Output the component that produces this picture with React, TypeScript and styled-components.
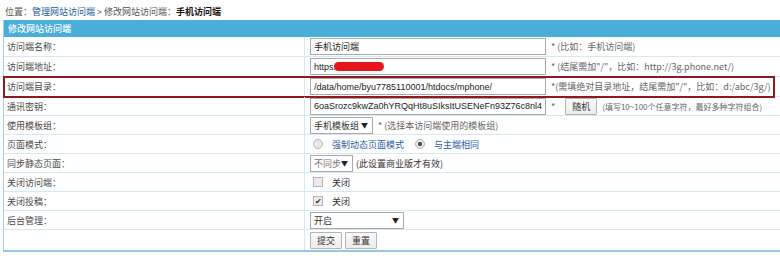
import React from "react";
import styled, { createGlobalStyle, css } from "styled-components";

const Global = createGlobalStyle`
  html, body { margin: 0; padding: 0; background: #fff; }
  body {
    font-family: "Noto Sans CJK SC", "Noto Sans", sans-serif;
    font-size: 9px;
    color: #444;
    overflow: hidden;
  }
`;

const Page = styled.div`
  padding: 4px 0 0 3px;
  width: 800px;
`;

const Crumb = styled.div`
  height: 16px;
  line-height: 16px;
  padding-left: 2px;
  color: #555;
`;

const CrumbLink = styled.span`
  color: #1d5a9e;
`;

const CrumbCurrent = styled.span`
  color: #111;
  font-weight: bold;
`;

const Panel = styled.div`
  border-left: 1px solid #a5d3ea;
  border-bottom: 2px solid #92c8e1;
`;

const PanelHead = styled.div`
  height: 17px;
  line-height: 17px;
  background: #4aaedb;
  color: #fff;
  padding-left: 4px;
  font-weight: 500;
`;

const Row = styled.div<{ $h: number; $mark?: boolean }>`
  display: grid;
  grid-template-columns: 301px 1fr;
  height: ${(p) => p.$h}px;
  border-bottom: 1px solid #d2eaf6;
  position: relative;
  &:last-child { border-bottom: none; }
  ${(p) =>
    p.$mark &&
    css`
      &::after {
        content: "";
        position: absolute;
        left: -1px;
        top: -1px;
        width: 768px;
        bottom: -2px;
        border: 2px solid #8c1a1f;
        pointer-events: none;
      }
    `}
`;

const Label = styled.div`
  border-right: 1px solid #d2eaf6;
  padding-left: 3px;
  display: flex;
  align-items: center;
  color: #484848;
`;

const Value = styled.div`
  padding-left: 5px;
  display: flex;
  align-items: center;
  gap: 3px;
  white-space: nowrap;
`;

const TextInput = styled.input`
  box-sizing: border-box;
  width: 236px;
  height: 17px;
  border: 1px solid #a9a9a9;
  padding: 0 3px;
  font-family: "Liberation Sans", Arial, sans-serif;
  font-size: 9px;
  color: #222;
  background: #fff;
  outline: none;
  margin: 0;
`;

const CnInput = styled(TextInput)`
  font-family: "Noto Sans CJK SC", sans-serif;
  font-size: 9px;
`;

const Redact = styled.span`
  position: absolute;
  left: 24px;
  top: 4px;
  width: 50px;
  height: 9px;
  border-radius: 6px;
  background: #e8141b;
  filter: blur(0.6px);
`;

const InputWrap = styled.span`
  position: relative;
  display: inline-flex;
`;

const Hint = styled.span<{ $gap?: number; $size?: number }>`
  color: #666;
  margin-left: 2px;
  margin-right: ${(p) => p.$gap ?? 0}px;
  font-size: ${(p) => p.$size ?? 9}px;
`;

const Btn = styled.button`
  box-sizing: border-box;
  height: 17px;
  padding: 0 6px;
  border: 1px solid #b5b5b5;
  background: linear-gradient(#fafafa, #ececec);
  font-family: "Noto Sans CJK SC", sans-serif;
  font-size: 9px;
  color: #333;
  line-height: 15px;
  margin: 0;
  border-radius: 1px;
`;

const SelectBox = styled.span<{ $w: number }>`
  box-sizing: border-box;
  width: ${(p) => p.$w}px;
  height: 17px;
  border: 1px solid #a9a9a9;
  background: #fff;
  display: inline-flex;
  align-items: center;
  justify-content: space-between;
  padding: 0 4px 0 3px;
  color: #333;
`;

const Muted = styled.span`
  color: #777;
`;

const Caret = styled.span`
  font-size: 7px;
  color: #222;
`;

const Radio = styled.span<{ $on?: boolean }>`
  box-sizing: border-box;
  width: 10px;
  height: 10px;
  border-radius: 50%;
  border: 1px solid #b4b4b4;
  background: radial-gradient(circle, ${(p) => (p.$on ? "#555 0 2px, #e9e9e9 2.5px" : "#e9e9e9 0")});
  display: inline-block;
  margin: 0 6px 0 3px;
`;

const Check = styled.span`
  box-sizing: border-box;
  width: 10px;
  height: 10px;
  border: 1px solid #b4b4b4;
  background: #ececec;
  display: inline-flex;
  align-items: center;
  justify-content: center;
  margin: 0 6px 0 3px;
  color: #333;
  font-size: 8px;
  line-height: 1;
`;

const Link = styled.span`
  color: #2a5aa5;
  margin-right: 5px;
`;

const Plain = styled.span`
  color: #333;
`;

export default function App() {
  return (
    <>
      <Global />
      <Page>
        <Crumb>
          位置：<CrumbLink>管理网站访问端</CrumbLink> &gt; 修改网站访问端：<CrumbCurrent>手机访问端</CrumbCurrent>
        </Crumb>
        <Panel>
          <PanelHead>修改网站访问端</PanelHead>
          <Row $h={19}>
            <Label>访问端名称：</Label>
            <Value>
              <CnInput defaultValue="手机访问端" />
              <Hint>* (比如：手机访问端)</Hint>
            </Value>
          </Row>
          <Row $h={19}>
            <Label>访问端地址：</Label>
            <Value>
              <InputWrap>
                <TextInput defaultValue="https:" />
                <Redact />
              </InputWrap>
              <Hint>* (结尾需加"/"，比如：http://3g.phone.net/)</Hint>
            </Value>
          </Row>
          <Row $h={19} $mark>
            <Label>访问端目录：</Label>
            <Value>
              <TextInput defaultValue="/data/home/byu7785110001/htdocs/mphone/" />
              <Hint>*(需填绝对目录地址，结尾需加"/"，比如：d:/abc/3g/)</Hint>
            </Value>
          </Row>
          <Row $h={18}>
            <Label>通讯密钥：</Label>
            <Value>
              <TextInput defaultValue="6oaSrozc9kwZa0hYRQqHt8uSIksItUSENeFn93Z76c8nl4gEC2xYz" />
              <Hint $gap={7}>*</Hint>
              <Btn>随机</Btn>
              <Hint $size={8}>(填写10~100个任意字符，最好多种字符组合)</Hint>
            </Value>
          </Row>
          <Row $h={18}>
            <Label>使用模板组：</Label>
            <Value>
              <SelectBox $w={63}>
                手机模板组<Caret>▼</Caret>
              </SelectBox>
              <Hint>* (选择本访问端使用的模板组)</Hint>
            </Value>
          </Row>
          <Row $h={18}>
            <Label>页面模式：</Label>
            <Value>
              <Radio />
              <Link>强制动态页面模式</Link>
              <Radio $on />
              <Link>与主端相同</Link>
            </Value>
          </Row>
          <Row $h={18}>
            <Label>同步静态页面：</Label>
            <Value>
              <SelectBox $w={43}>
                <Muted>不同步</Muted>
                <Caret>▼</Caret>
              </SelectBox>
              <Plain>(此设置商业版才有效)</Plain>
            </Value>
          </Row>
          <Row $h={18}>
            <Label>关闭访问端：</Label>
            <Value>
              <Check />
              <Plain>关闭</Plain>
            </Value>
          </Row>
          <Row $h={18}>
            <Label>关闭投稿：</Label>
            <Value>
              <Check>✔</Check>
              <Plain>关闭</Plain>
            </Value>
          </Row>
          <Row $h={18}>
            <Label>后台管理：</Label>
            <Value>
              <SelectBox $w={94}>
                开启<Caret>▼</Caret>
              </SelectBox>
            </Value>
          </Row>
          <Row $h={20}>
            <Label />
            <Value>
              <Btn>提交</Btn>
              <Btn>重置</Btn>
            </Value>
          </Row>
        </Panel>
      </Page>
    </>
  );
}
